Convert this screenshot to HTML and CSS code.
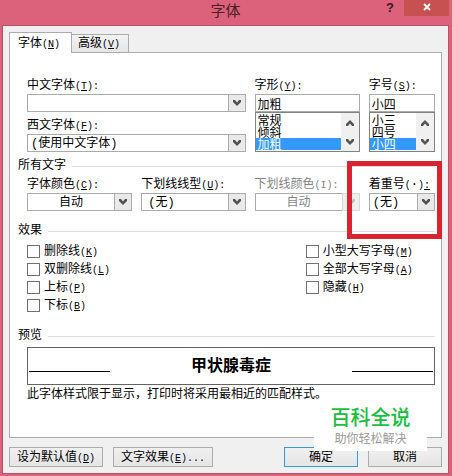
FILE: index.html
```html
<!DOCTYPE html>
<html lang="zh-CN">
<head>
    <meta charset="UTF-8">
    <meta name="viewport" content="width=device-width, initial-scale=1.0">
    <title>字体</title>
    <link rel="stylesheet" href="styles.css">
</head>
<body>
<svg width="0" height="0" class="defs">
    <symbol id="down" viewBox="0 0 8 6"><path d="M0 0h2l2 2.4L6 0h2v2L4 6 0 2z" fill="currentColor"/></symbol>
    <symbol id="up" viewBox="0 0 8 6"><path d="M0 6h2l2-2.4L6 6h2V4L4 0 0 4z" fill="currentColor"/></symbol>
</svg>
<div class="window">
    <header class="titlebar">
        <h1>字体</h1>
        <div class="window-buttons">
            <button class="help" aria-label="帮助">?</button>
            <button class="close" aria-label="关闭">
                <svg width="8" height="8" viewBox="0 0 8 8"><path d="M1 1l6 6M7 1L1 7" stroke="#fff" stroke-width="1.8"/></svg>
            </button>
        </div>
    </header>

    <main class="client">
        <nav class="tabs">
            <button class="tab active">字体<span class="key">(<u>N</u>)</span></button>
            <button class="tab">高级<span class="key">(<u>V</u>)</span></button>
        </nav>

        <div class="panel">
            <div class="fields">
                <div class="fonts">
                    <div class="field">
                        <label for="cn-font">中文字体<span class="key">(<u>T</u>):</span></label>
                        <div class="combo">
                            <select id="cn-font"><option></option></select>
                            <span class="arrow"><svg width="8" height="6"><use href="#down"/></svg></span>
                        </div>
                    </div>
                    <div class="field">
                        <label for="en-font">西文字体<span class="key">(<u>F</u>):</span></label>
                        <div class="combo">
                            <select id="en-font"><option>(使用中文字体)</option></select>
                            <span class="arrow"><svg width="8" height="6"><use href="#down"/></svg></span>
                        </div>
                    </div>
                </div>
                <div class="field">
                    <label for="style">字形<span class="key">(<u>Y</u>):</span></label>
                    <input type="text" id="style" value="加粗">
                    <div class="list">
                        <select size="3" aria-label="字形">
                            <option>常规</option>
                            <option>倾斜</option>
                            <option selected>加粗</option>
                        </select>
                        <div class="scroll">
                            <svg width="8" height="6"><use href="#up"/></svg>
                            <svg width="8" height="6"><use href="#down"/></svg>
                        </div>
                    </div>
                </div>
                <div class="field">
                    <label for="size">字号<span class="key">(<u>S</u>):</span></label>
                    <input type="text" id="size" value="小四">
                    <div class="list">
                        <select size="3" aria-label="字号">
                            <option>小三</option>
                            <option>四号</option>
                            <option selected>小四</option>
                        </select>
                        <div class="scroll">
                            <svg width="8" height="6"><use href="#up"/></svg>
                            <svg width="8" height="6"><use href="#down"/></svg>
                        </div>
                    </div>
                </div>
            </div>

            <h2 class="all-text">所有文字</h2>
            <div class="fields">
                <div class="field">
                    <label for="color">字体颜色<span class="key">(<u>C</u>):</span></label>
                    <div class="combo auto">
                        <select id="color"><option>自动</option></select>
                        <span class="arrow"><svg width="8" height="6"><use href="#down"/></svg></span>
                    </div>
                </div>
                <div class="field">
                    <label for="underline">下划线线型<span class="key">(<u>U</u>):</span></label>
                    <div class="combo indent">
                        <select id="underline"><option>(无)</option></select>
                        <span class="arrow"><svg width="8" height="6"><use href="#down"/></svg></span>
                    </div>
                </div>
                <div class="field disabled">
                    <label for="underline-color">下划线颜色<span class="key">(I):</span></label>
                    <div class="combo auto">
                        <select id="underline-color" disabled><option>自动</option></select>
                        <span class="arrow"><svg width="8" height="6"><use href="#down"/></svg></span>
                    </div>
                </div>
                <div class="field marked">
                    <label for="emphasis">着重号<span class="key">(</span>·<span class="key">)<u>:</u></span></label>
                    <div class="combo">
                        <select id="emphasis"><option>(无)</option></select>
                        <span class="arrow"><svg width="8" height="6"><use href="#down"/></svg></span>
                    </div>
                </div>
            </div>

            <h2>效果</h2>
            <div class="effects">
                <div class="checks">
                    <label><input type="checkbox"><span>删除线<span class="key">(<u>K</u>)</span></span></label>
                    <label><input type="checkbox"><span>双删除线<span class="key">(<u>L</u>)</span></span></label>
                    <label><input type="checkbox"><span>上标<span class="key">(<u>P</u>)</span></span></label>
                    <label><input type="checkbox"><span>下标<span class="key">(<u>B</u>)</span></span></label>
                </div>
                <div class="checks">
                    <label><input type="checkbox"><span>小型大写字母<span class="key">(<u>M</u>)</span></span></label>
                    <label><input type="checkbox"><span>全部大写字母<span class="key">(<u>A</u>)</span></span></label>
                    <label><input type="checkbox"><span>隐藏<span class="key">(<u>H</u>)</span></span></label>
                </div>
            </div>

            <h2>预览</h2>
            <div class="preview">
                <span class="rule"></span>
                <strong>甲状腺毒症</strong>
                <span class="rule"></span>
            </div>
            <p class="note">此字体样式限于显示，打印时将采用最相近的匹配样式。</p>
        </div>

        <footer class="actions">
            <button class="btn">设为默认值<span class="key">(<u>D</u>)</span></button>
            <button class="btn">文字效果<span class="key">(<u>E</u>)...</span></button>
            <button class="btn ok">确定</button>
            <button class="btn">取消</button>
        </footer>
    </main>

    <div class="watermark">
        <div class="brand">百科全说</div>
        <div class="slogan">助你轻松解决</div>
    </div>
</div>
</body>
</html>
```

FILE: styles.css
```css
* {
    box-sizing: border-box;
}

body {
    margin: 0;
    color: #000;
}

body, button, input, select {
    font-family: "Liberation Mono", "Noto Sans CJK SC", monospace;
    font-size: 12px;
    line-height: 16px;
}

.defs {
    position: absolute;
}

.window {
    position: relative;
    display: flex;
    flex-direction: column;
    min-height: 100vh;
    padding: 0 3px 2px 2px;
    background: #dc627c;
}

/* title bar */
.titlebar {
    display: grid;
    grid-template-columns: 1fr auto 1fr;
    height: 25px;
}

.titlebar h1 {
    grid-column: 2;
    margin: 0;
    font-family: "Noto Sans CJK SC", sans-serif;
    font-size: 15px;
    font-weight: normal;
    line-height: 20px;
    color: #4a2029;
}

.window-buttons {
    display: flex;
    justify-content: flex-end;
    align-items: flex-start;
    gap: 8px;
}

.window-buttons button {
    padding: 0;
    border: 0;
    background: none;
}

.window-buttons .help {
    width: 12px;
    font-family: "Liberation Sans", sans-serif;
    font-size: 13px;
    font-weight: bold;
    line-height: 16px;
    color: #3a1820;
}

.window-buttons .close {
    display: flex;
    justify-content: center;
    align-items: center;
    width: 45px;
    height: 16px;
    padding-bottom: 2px;
    background: #c75050;
}

.client {
    flex: 1;
    display: flex;
    flex-direction: column;
    padding: 6px 6px 6px;
    border: 1px solid #b9506a;
    background: #f0f0f0;
}

/* "(N):" runs, half the width of a Chinese character */
.key {
    font-size: 10px;
}

/* tabs */
.tabs {
    display: flex;
    align-items: flex-end;
    margin-bottom: -1px;
}

.tab {
    height: 19px;
    padding: 1px 8px 0 6px;
    border: 1px solid #acacac;
    border-left: 0;
    background: linear-gradient(#f2f2f2, #e6e6e6);
}

.tab.active {
    position: relative;
    height: 21px;
    padding: 2px 11px 0 8px;
    border-left: 1px solid #acacac;
    border-bottom: 0;
    background: #fff;
}

.panel {
    flex: 1;
    padding: 24px 6px 8px 8px;
    border: 1px solid #acacac;
    background: #fff;
}

/* form fields */
.fields {
    display: grid;
    grid-template-columns: minmax(0, 105fr) minmax(0, 104fr) minmax(0, 105fr) minmax(0, 66fr);
    gap: 9px;
    margin-left: 9px;
}

.fonts {
    grid-column: span 2;
    display: flex;
    flex-direction: column;
    gap: 5px;
}

.field {
    position: relative;
    display: flex;
    flex-direction: column;
}

.field label {
    height: 17px;
    line-height: 19px;
    white-space: nowrap;
}

.field input,
.combo select {
    width: 100%;
    height: 18px;
    padding: 1px 2px 0;
    border: 1px solid #ababab;
    border-radius: 0;
    background: #fff;
    color: #000;
}

.combo {
    display: grid;
}

.combo select {
    grid-area: 1 / 1;
    appearance: none;
    padding: 1px 18px 0 3px;
}

.combo.auto select {
    padding-left: 31px;
}

.combo.indent select {
    padding-left: 6px;
}

.arrow {
    grid-area: 1 / 1;
    justify-self: end;
    display: flex;
    justify-content: center;
    align-items: center;
    width: 18px;
    border: 1px solid #ababab;
    background: #e9e9e9;
    color: #505050;
    pointer-events: none;
}

.disabled,
.disabled .combo select {
    color: #838383;
    opacity: 1;
}

.disabled .arrow {
    border-color: #d9d9d9;
    background: #efefef;
    color: #bfbfbf;
}

.list {
    display: flex;
    height: 40px;
    border: 1px solid #828282;
}

.list select {
    flex: 1;
    min-width: 0;
    height: 38px;
    padding: 1px 0 0;
    border: 0;
    border-radius: 0;
    outline: 0;
    overflow: hidden;
    background: #fff;
    scrollbar-width: none;
}

.list option {
    display: flex;
    align-items: center;
    height: 12px;
    min-height: 12px;
    padding: 0 2px;
    color: #000;
}

.list option:checked {
    background: linear-gradient(#3399ff, #3399ff);
    color: #fff;
}

.scroll {
    display: flex;
    flex-direction: column;
    justify-content: space-between;
    align-items: center;
    width: 18px;
    padding: 7px 0 6px;
    background: #f0f0f0;
    color: #555;
}

/* red frame round the emphasis mark field */
.marked {
    z-index: 1;
}

.marked::after {
    content: "";
    position: absolute;
    top: -15px;
    right: -7px;
    bottom: -28px;
    left: -22px;
    border: 5px solid #d9232e;
    pointer-events: none;
}

/* group headings */
h2 {
    display: flex;
    align-items: center;
    gap: 6px;
    height: 16px;
    margin: 12px 0 3px;
    font-size: 12px;
    font-weight: normal;
    line-height: 18px;
}

h2::after {
    content: "";
    flex: 1;
    height: 1px;
    background: #dcdcdc;
}

h2.all-text {
    margin: 6px 0 2px;
}

.effects {
    display: grid;
    grid-template-columns: 278fr 129fr;
    margin: 0 0 14px 9px;
}

.checks label {
    display: flex;
    align-items: center;
    height: 18px;
    white-space: nowrap;
}

.checks label > span {
    padding-top: 2px;
}

.checks input {
    appearance: none;
    width: 13px;
    height: 13px;
    margin: 0 4px 0 0;
    border: 1px solid #707070;
    background: #fff;
}

/* preview */
.preview {
    display: flex;
    justify-content: space-between;
    align-items: center;
    height: 38px;
    margin-left: 9px;
    padding: 0 1px;
    border: 1px solid #646464;
}

.preview strong {
    font-size: 16px;
    line-height: 24px;
    padding-top: 2px;
}

.rule {
    width: 20%;
    height: 12px;
    border-bottom: 1px solid #000;
}

.note {
    margin: 2px 0 0 9px;
}

/* bottom buttons */
.actions {
    display: flex;
    gap: 10px;
    margin-top: 9px;
}

.btn {
    min-width: 74px;
    height: 20px;
    padding: 3px 7px 0;
    border: 1px solid #acacac;
    background: linear-gradient(#f0f0f0, #e5e5e5);
    color: #000;
    line-height: 15px;
    white-space: nowrap;
}

.btn.ok {
    margin-left: auto;
    border-color: #3399dd;
}

.watermark {
    position: absolute;
    z-index: 2;
    right: 25px;
    bottom: 25px;
    width: 113px;
    background: #fff;
    font-family: "Noto Sans CJK SC", sans-serif;
    text-align: center;
}

.brand {
    font-size: 20px;
    font-weight: 500;
    line-height: 27px;
    color: #16c23c;
}

.slogan {
    padding-bottom: 5px;
    color: #999;
}
```
